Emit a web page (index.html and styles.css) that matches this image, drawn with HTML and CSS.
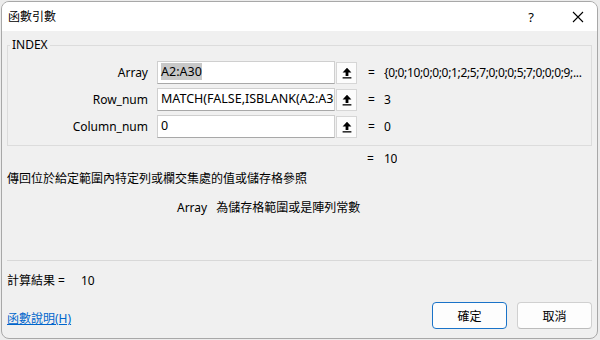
FILE: index.html
```html
<html>
<head>
	<title>函數引數</title>
	<link rel="stylesheet" href="styles.css">
</head>
<body>
	<div class="window">
		<div class="titlebar">
			<span class="title">函數引數</span>
			<span class="help">?</span>
			<span class="close">
				<svg width="12" height="12" viewBox="0 0 12 12"><path d="M1 1 L11 11 M11 1 L1 11" stroke="#000" stroke-width="1.1" fill="none"/></svg>
			</span>
		</div>
		<div class="content">
			<fieldset class="group">
				<legend>INDEX</legend>
				<div class="arg-row">
					<label>Array</label>
					<div class="field"><span class="sel">A2:A30</span></div>
					<button class="pick"><svg width="10" height="12" viewBox="0 0 10 12"><path d="M5 0.8 L9.4 5.6 H6.4 V9 H3.6 V5.6 H0.6 Z"/><rect x="0.6" y="10.2" width="8.8" height="1.3"/></svg></button>
					<span class="eq">=</span>
					<span class="val">{0;0;10;0;0;0;1;2;5;7;0;0;0;5;7;0;0;0;9;...</span>
				</div>
				<div class="arg-row">
					<label>Row_num</label>
					<div class="field">MATCH(FALSE,ISBLANK(A2:A30),0)</div>
					<button class="pick"><svg width="10" height="12" viewBox="0 0 10 12"><path d="M5 0.8 L9.4 5.6 H6.4 V9 H3.6 V5.6 H0.6 Z"/><rect x="0.6" y="10.2" width="8.8" height="1.3"/></svg></button>
					<span class="eq">=</span>
					<span class="val">3</span>
				</div>
				<div class="arg-row">
					<label>Column_num</label>
					<div class="field">0</div>
					<button class="pick"><svg width="10" height="12" viewBox="0 0 10 12"><path d="M5 0.8 L9.4 5.6 H6.4 V9 H3.6 V5.6 H0.6 Z"/><rect x="0.6" y="10.2" width="8.8" height="1.3"/></svg></button>
					<span class="eq">=</span>
					<span class="val">0</span>
				</div>
			</fieldset>

			<div class="result"><span class="eq">=</span><span class="val">10</span></div>
			<div class="desc">傳回位於給定範圍內特定列或欄交集處的值或儲存格參照</div>
			<div class="arg-help"><span class="arg-name">Array</span>為儲存格範圍或是陣列常數</div>

			<div class="separator"></div>

			<div class="calc">計算結果 =<span class="calc-val">10</span></div>

			<div class="footer">
				<a href="#" class="help-link">函數說明(H)</a>
				<div class="buttons">
					<button class="btn default">確定</button>
					<button class="btn">取消</button>
				</div>
			</div>
		</div>
	</div>
</body>
</html>
```

FILE: styles.css
```css
html, body {
	margin: 0;
	background-color: #ececec;
}
body {
	font-family: "Noto Sans", "Noto Sans CJK TC", sans-serif;
	font-size: 12px;
	color: #000;
}
.window {
	box-sizing: border-box;
	width: 597px;
	height: 338px;
	margin: 1px 0 0 1px;
	border: 1px solid #a8a8a8;
	border-radius: 8px;
	overflow: hidden;
	background-color: #f0f0f0;
}
.titlebar {
	height: 29px;
	background-color: #fff;
	display: flex;
	align-items: center;
	padding-left: 6px;
}
.title {
	flex: 1;
	line-height: 16px;
	padding-top: 1px;
}
.help {
	font-size: 13px;
	width: 14px;
	margin-right: 34px;
	text-align: center;
}
.close {
	width: 12px;
	height: 12px;
	margin-right: 13px;
	display: flex;
}
.content {
	padding: 0 5px;
}
.group {
	margin: 6px 0 0 0;
	padding: 8px 0 7px 0;
	border: 1px solid #dcdcdc;
	min-width: 0;
}
.group legend {
	margin-left: 2px;
	padding: 0 2px;
	line-height: 16px;
}
.arg-row {
	display: flex;
	align-items: center;
	height: 23px;
	margin-bottom: 4px;
}
.arg-row:last-child {
	margin-bottom: 0;
}
.arg-row label {
	flex-shrink: 0;
	width: 140px;
	text-align: right;
	margin-right: 9px;
}
.field {
	flex-shrink: 0;
	box-sizing: border-box;
	width: 178px;
	height: 23px;
	background-color: #fff;
	border: 1px solid #cfcfcf;
	border-bottom-color: #a8a8a8;
	padding: 0 3px;
	font-size: 12.5px;
	line-height: 20px;
	white-space: nowrap;
	overflow: hidden;
}
.sel {
	background-color: #c8c8c8;
}
.pick {
	flex-shrink: 0;
	box-sizing: border-box;
	width: 21px;
	height: 22px;
	margin-left: 1px;
	padding: 0;
	border: 1px solid #d6d6d6;
	background-color: #fcfcfc;
	display: flex;
	align-items: center;
	justify-content: center;
}
.eq {
	flex-shrink: 0;
	margin-left: 11px;
	width: 16px;
}
.val {
	white-space: nowrap;
	overflow: hidden;
	letter-spacing: -0.35px;
}
.result {
	margin-top: 5px;
	padding-left: 360px;
	line-height: 16px;
	display: flex;
}
.result .eq {
	margin-left: 0;
	width: 17px;
}
.desc {
	margin-top: 4px;
	line-height: 16px;
}
.arg-help {
	margin-top: 13px;
	padding-left: 170px;
	line-height: 16px;
}
.arg-name {
	margin-right: 9px;
}
.separator {
	margin-top: 44px;
	border-top: 1px solid #d8d8d8;
}
.calc {
	margin-top: 12px;
	line-height: 16px;
}
.calc-val {
	margin-left: 16px;
}
.footer {
	margin-top: 13px;
	display: flex;
	align-items: center;
	justify-content: space-between;
}
.help-link {
	color: #0066cc;
	text-decoration: underline;
	padding-top: 5px;
}
.buttons {
	display: flex;
	gap: 10px;
}
.btn {
	box-sizing: border-box;
	width: 75px;
	height: 27px;
	font-family: "Noto Sans", "Noto Sans CJK TC", sans-serif;
	font-size: 12px;
	color: #000;
	background-color: #fdfdfd;
	border: 1px solid #d0d0d0;
	border-bottom-color: #bcbcbc;
	border-radius: 4px;
}
.btn.default {
	border: 1px solid #1a73c8;
}
```
